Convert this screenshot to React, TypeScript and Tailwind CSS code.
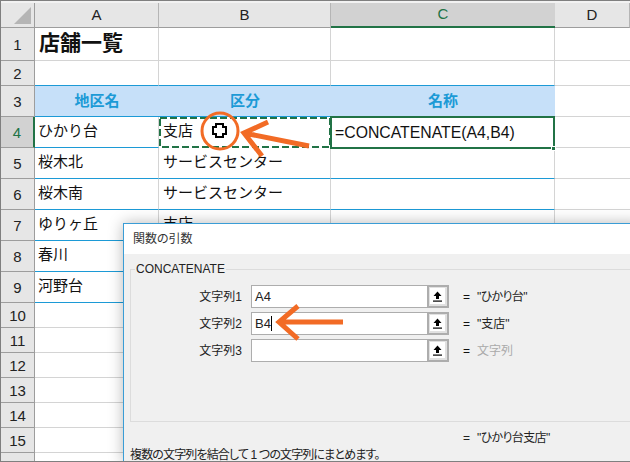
const font = "[font-family:'Liberation_Sans','Noto_Sans_CJK_JP',sans-serif]";

const grid = "border-r border-b border-[#d4d4d4]";
const blue = "border-[#1c9ad6]";

function RowHead({ n, h, active }: { n: number; h: string; active?: boolean }) {
  return (
    <div
      className={`${h} w-[34px] shrink-0 flex items-center justify-center pt-[3px] text-[15px] border-b border-[#9d9d9d] ${
        active ? "bg-[#d2d2d2] text-[#217346] border-r-2 border-r-[#217346]" : "bg-[#e6e6e6] text-[#222] border-r border-r-[#9d9d9d]"
      }`}
    >
      {n}
    </div>
  );
}

function Row({
  n,
  h,
  a,
  b,
  border = grid,
}: {
  n: number;
  h: string;
  a?: string;
  b?: string;
  border?: string;
}) {
  return (
    <div className="flex">
      <RowHead n={n} h={h} />
      <div className={`${h} w-[124px] shrink-0 flex items-center pl-[3px] pb-[2px] text-[15px] text-[#111] border-r border-r-[#d4d4d4] border-b ${border}`}>{a}</div>
      <div className={`${h} w-[172px] shrink-0 flex items-center pl-[4px] pb-[2px] text-[15px] text-[#111] border-r border-r-[#d4d4d4] border-b ${border}`}>{b}</div>
      <div className={`${h} w-[224px] shrink-0 border-r border-r-[#d4d4d4] border-b ${border}`} />
      <div className={`${h} flex-1 border-b border-b-[#d4d4d4]`} />
    </div>
  );
}

function ColHead({ w, label, active }: { w: string; label: string; active?: boolean }) {
  return (
    <div
      className={`${w} h-full flex items-center justify-center text-[15px] border-b ${
        active ? "bg-[#d2d2d2] text-[#217346] border-b-2 border-b-[#217346]" : "bg-[#e6e6e6] text-[#222] border-b-[#9d9d9d] border-r border-r-[#b5b5b5]"
      }`}
    >
      {label}
    </div>
  );
}

function RefButton() {
  return (
    <div className="w-[22px] h-full shrink-0 border-2 border-[#adadad] bg-[#e1e1e1] p-[1px] pr-[2px] pb-[2px]">
      <div className="w-full h-full bg-white flex items-center justify-center">
        <svg width="11" height="11" viewBox="0 0 11 11">
          <path d="M5.5 0.5 L9.5 5 H7 V8 H4 V5 H1.5 Z" fill="#000" />
          <rect x="1" y="9.5" width="9" height="1.2" fill="#000" />
        </svg>
      </div>
    </div>
  );
}

function ArgRow({ label, value, result, tone }: { label: string; value?: string; result: string; tone: string }) {
  return (
    <div className="flex h-[23px] items-center">
      <div className="w-[111px] text-right text-[12px] text-[#222]">{label}</div>
      <div className="ml-[9px] w-[198px] h-full flex shrink-0">
        <div className="flex-1 h-full bg-white border border-[#adadad] border-r-0 pl-[3px] flex items-center text-[13px] text-[#222] leading-none">
          {value}
          {value === "B4" && <span className="w-px h-[15px] bg-black" />}
        </div>
        <RefButton />
      </div>
      <div className="ml-[14px] w-[14px] text-[12px] text-[#111]">=</div>
      <div className={`text-[12px] ${tone}`}>{result}</div>
    </div>
  );
}

export default function App() {
  return (
    <div className={`relative w-[630px] h-[462px] overflow-hidden bg-white border-l border-t border-b border-[#7f7f7f] ${font}`}>
      <div className="h-[27px] flex pt-[2px] bg-[#f2f2f2]">
        <div className="w-[34px] h-full bg-[#e6e6e6] border-r border-b border-[#9d9d9d] flex items-end justify-end pr-[3px] pb-[3px]">
          <div className="w-0 h-0 border-l-[17px] border-l-transparent border-b-[17px] border-b-[#b5b5b5]" />
        </div>
        <ColHead w="w-[124px]" label="A" />
        <ColHead w="w-[172px]" label="B" />
        <ColHead w="w-[224px]" label="C" active />
        <ColHead w="flex-1" label="D" />
      </div>

      <div className="flex">
        <RowHead n={1} h="h-[33px]" />
        <div className="h-[33px] w-[124px] shrink-0 pl-[4px] pb-[3px] flex items-center text-[21px] font-bold text-[#111] border-r border-b border-[#d4d4d4] whitespace-nowrap">
          店舗一覧
        </div>
        <div className={`h-[33px] w-[172px] shrink-0 ${grid}`} />
        <div className={`h-[33px] w-[224px] shrink-0 ${grid}`} />
        <div className="h-[33px] flex-1 border-b border-[#d4d4d4]" />
      </div>
      <div className="flex">
        <RowHead n={2} h="h-[25px]" />
        <div className={`h-[25px] w-[124px] shrink-0 border-r border-r-[#d4d4d4] border-b ${blue}`} />
        <div className={`h-[25px] w-[172px] shrink-0 border-r border-r-[#d4d4d4] border-b ${blue}`} />
        <div className={`h-[25px] w-[224px] shrink-0 border-r border-r-[#d4d4d4] border-b ${blue}`} />
        <div className="h-[25px] flex-1 border-b border-[#d4d4d4]" />
      </div>

      <div className="flex">
        <RowHead n={3} h="h-[31px]" />
        <div className="h-[31px] w-[520px] shrink-0 flex bg-[#c6e0f9] text-[15px] font-bold text-[#1c9ad6] border-b border-[#1c9ad6]">
          <div className="w-[124px] flex items-center justify-center">地区名</div>
          <div className="w-[172px] flex items-center justify-center">区分</div>
          <div className="w-[224px] flex items-center justify-center">名称</div>
        </div>
        <div className="h-[31px] flex-1 border-b border-[#d4d4d4]" />
      </div>

      <div className="flex">
        <RowHead n={4} h="h-[31px]" active />
        <div className={`h-[31px] w-[124px] shrink-0 flex items-center pl-[3px] pb-[2px] text-[15px] text-[#111] border-r border-r-[#d4d4d4] border-b ${blue}`}>ひかり台</div>
        <div className="relative h-[31px] w-[172px] shrink-0 flex items-center pl-[4px] pb-[2px] text-[15px] text-[#111]">
          支店
          <svg className="absolute inset-0" width="172" height="31" viewBox="0 0 172 31" fill="none">
            <rect x="1" y="1" width="170" height="29" stroke="#217346" strokeWidth="2" strokeDasharray="7 3" />
          </svg>
        </div>
        <div className="relative h-[31px] w-[224px] shrink-0 flex items-center pl-[4px] text-[15.8px] text-[#111] whitespace-nowrap">
          =CONCATENATE(A4,B4)
          <div className="absolute -top-px -left-px right-0 -bottom-px border-2 border-[#217346]" />
          <div className="absolute -right-[1px] -bottom-[3px] w-[5px] h-[5px] bg-[#217346] border border-white" />
        </div>
        <div className="h-[31px] flex-1 border-b border-[#d4d4d4]" />
      </div>

      <Row n={5} h="h-[31px]" a="桜木北" b="サービスセンター" border={blue} />
      <Row n={6} h="h-[31px]" a="桜木南" b="サービスセンター" border={blue} />
      <Row n={7} h="h-[31px]" a="ゆりヶ丘" b="支店" border={blue} />
      <Row n={8} h="h-[31px]" a="春川" border={blue} />
      <Row n={9} h="h-[31px]" a="河野台" border={blue} />
      {[10, 11, 12, 13, 14, 15, 16].map((n) => (
        <Row key={n} n={n} h="h-[25px]" />
      ))}

      {/* Function arguments dialog */}
      <div className="absolute left-[122px] top-[222px] w-[520px] h-[240px] bg-[#f0f0f0] border-l border-t border-[#3a9dd6] shadow-[0_0_14px_rgba(0,0,0,0.28)] flex flex-col [font-feature-settings:'palt']">
        <div className="h-[30px] shrink-0 bg-white flex items-center pl-[9px] text-[12px] text-[#333]">関数の引数</div>
        <div className="relative mt-[15px] ml-[6px] h-[153px] w-[510px] shrink-0 border border-[#dcdcdc] pt-[15px] flex flex-col gap-[4px]">
          <div className="absolute left-[4px] -top-[9px] bg-[#f0f0f0] px-[1px] text-[12px] leading-[17px] text-[#222]">CONCATENATE</div>
          <ArgRow label="文字列1" value="A4" result={'"ひかり台"'} tone="text-[#222] tracking-[-0.6px]" />
          <ArgRow label="文字列2" value="B4" result={'"支店"'} tone="text-[#222]" />
          <ArgRow label="文字列3" result="文字列" tone="text-[#aaa]" />
        </div>
        <div className="ml-[339px] mt-[7px] h-[17px] flex items-center text-[12px] text-[#222]">
          <span className="w-[14px]">=</span>
          <span className="tracking-[-0.6px]">"ひかり台支店"</span>
        </div>
        <div className="ml-[6px] mt-[2px] text-[12px] leading-[15px] text-[#222] whitespace-nowrap tracking-[-0.85px]">
          複数の文字列を結合して 1 つの文字列にまとめます。
        </div>
      </div>

      {/* Annotation overlay */}
      <svg className="absolute -left-px -top-px pointer-events-none" width="630" height="462" viewBox="0 0 630 462" fill="none">
        <circle cx="220" cy="131" r="18" stroke="#f26b25" strokeWidth="3" />
        <path d="M216 124 H223 V127 H226 V134 H223 V137 H216 V134 H213 V127 H216 Z" fill="#fff" stroke="#000" strokeWidth="2" />
        <path d="M309 146 L244 133 M268 122 L244 133 L262 156" stroke="#f26b25" strokeWidth="5" />
        <path d="M343 322 L279 322 M298 306 L279 322 L298 339" stroke="#f26b25" strokeWidth="5" />
      </svg>
    </div>
  );
}
